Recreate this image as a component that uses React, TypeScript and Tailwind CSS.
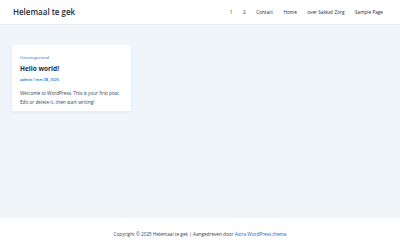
import React from "react";

export default function App() {
  const nav = ["1", "2", "Contact", "Home", "over Sakkali Zorg", "Sample Page"];
  return (
    <div
      className="flex h-[250px] w-[400px] flex-col bg-[#f0f5fa] text-[#334155]"
      style={{ fontFamily: '"Open Sans", "Noto Sans", sans-serif' }}
    >
      <header className="flex h-[25px] shrink-0 items-center justify-between border-b border-[#e8edf3] bg-white pl-[13px] pr-[17px]">
        <div className="text-[8px] font-semibold leading-none text-[#1e293b]">Helemaal te gek</div>
        <nav className="flex items-center gap-[10.5px] text-[4.7px] leading-none text-[#1e293b]">
          {nav.map((n) => (
            <span key={n}>{n}</span>
          ))}
        </nav>
      </header>
      <main className="flex-1 pl-[12px] pt-[20px]">
        <article className="flex h-[66px] w-[119px] flex-col bg-white px-[8px] pt-[10px] shadow-[0_1px_4px_rgba(0,0,0,0.06)]">
          <div className="text-[4.3px] leading-none text-[#046bd2]">Uncategorized</div>
          <h2 className="mt-[6.5px] text-[6.5px] font-bold leading-none text-[#1e293b]">Hello world!</h2>
          <div className="mt-[5.5px] text-[3.9px] font-semibold leading-none text-[#046bd2]">admin / mei 28, 2025</div>
          <p className="mt-[7px] text-[4.7px] leading-[9px] text-[#334155]">
            Welcome to WordPress. This is your first post. Edit or delete it, then start writing!
          </p>
        </article>
      </main>
      <footer className="flex h-[32px] shrink-0 items-center justify-center bg-white pt-[1px] text-[4.7px] leading-none text-[#334155]">
        <span>
          Copyright © 2025 Helemaal te gek | Aangedreven door{" "}
          <span className="text-[#046bd2]">Astra WordPress thema</span>
        </span>
      </footer>
    </div>
  );
}
